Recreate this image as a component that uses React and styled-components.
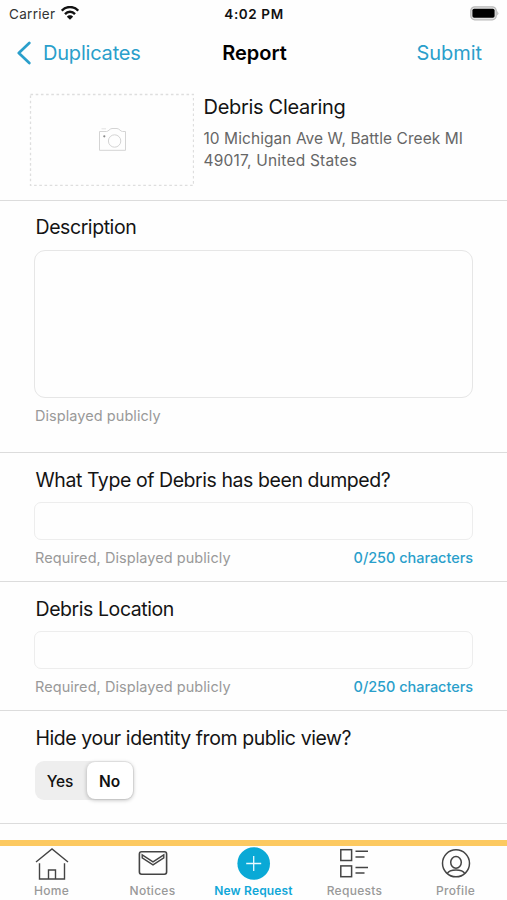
import React, { useState } from "react";
import styled, { createGlobalStyle } from "styled-components";

const BLUE = "#2a9fcb";

const GlobalStyle = createGlobalStyle`
  * {
    box-sizing: border-box;
  }
  body {
    margin: 0;
    background: #fff;
    font-family: Inter, "Liberation Sans", sans-serif;
    color: #141414;
  }
  button, input, textarea {
    font-family: inherit;
  }
`;

const Screen = styled.div`
  width: 507px;
  height: 900px;
  display: flex;
  flex-direction: column;
  overflow: hidden;
  background: #fefefe;
`;

const StatusBar = styled.div`
  height: 28px;
  padding: 0 8px 0 9px;
  display: grid;
  grid-template-columns: 1fr auto 1fr;
  align-items: center;
`;

const Carrier = styled.div`
  display: flex;
  align-items: center;
  gap: 6px;
  font-size: 13.5px;
  line-height: 28px;
  letter-spacing: 0.3px;
  color: #333;

  svg {
    position: relative;
    top: -1px;
  }
`;

const Clock = styled.div`
  font-size: 13.5px;
  font-weight: 600;
  line-height: 28px;
  letter-spacing: 0.6px;
  color: #111;
`;

const BatteryIcon = styled.svg`
  justify-self: end;
  display: block;
  margin-top: -2px;
`;

const NavBar = styled.div`
  height: 49px;
  padding: 0 25px 0 17px;
  display: grid;
  grid-template-columns: 200px 75px 190px;
  align-items: center;
`;

const NavButton = styled.button`
  display: flex;
  align-items: center;
  gap: 12px;
  padding: 0;
  border: none;
  background: none;
  color: ${BLUE};
  font-size: 20px;
  line-height: 24px;
  letter-spacing: ${(props) => props.$spacing};
  justify-self: ${(props) => props.$side};
`;

const NavTitle = styled.div`
  text-align: center;
  font-size: 20px;
  line-height: 24px;
  font-weight: 600;
  letter-spacing: 0;
  color: #000;
`;

const Summary = styled.div`
  height: 124px;
  padding: 16px 24px 0 29px;
  display: flex;
  gap: 9.5px;
  border-bottom: 1px solid #dcdcdc;
`;

const PhotoBox = styled.div`
  width: 165px;
  height: 93px;
  flex: none;
  display: flex;
  align-items: center;
  justify-content: center;
`;

const Title = styled.div`
  padding-top: 1px;
  font-size: 20px;
  line-height: 26px;
  letter-spacing: -0.3px;
`;

const Address = styled.div`
  margin-top: 8px;
  font-size: 15.5px;
  line-height: 22px;
  letter-spacing: ${(props) => props.$spacing};
  color: #666;
  white-space: nowrap;

  & + & {
    margin-top: 0;
  }
`;

const Section = styled.section`
  height: ${(props) => props.$height};
  padding: 13px 34px 0 35px;
  border-bottom: 1px solid #dcdcdc;
`;

const Label = styled.label`
  display: block;
  height: 26px;
  padding-left: 0.5px;
  font-size: 19.5px;
  line-height: ${(props) => props.$line || "28px"};
  letter-spacing: -0.43px;
  white-space: nowrap;
`;

const TextArea = styled.textarea`
  display: block;
  width: 439px;
  height: 148px;
  margin: 10px 0 0 -1px;
  border: 1px solid #e6e6e6;
  border-radius: 11px;
  background: #fefefe;
  resize: none;
  outline: none;
`;

const Input = styled.input`
  display: block;
  width: 439px;
  height: 38px;
  margin: 10px 0 0 -1px;
  border: 1px solid #ededed;
  border-radius: 7px;
  background: #fefefe;
  outline: none;
`;

const Hints = styled.div`
  margin-top: 8px;
  display: flex;
  justify-content: space-between;
  font-size: 14.5px;
  line-height: 20px;
  letter-spacing: 0.06px;
  color: #999;
`;

const Counter = styled.span`
  color: ${BLUE};
  font-weight: 500;
  letter-spacing: -0.04px;
`;

const Segmented = styled.div`
  display: flex;
  width: 99px;
  height: 39px;
  margin-top: 11px;
  padding: 1px;
  border-radius: 9px;
  background: #eee;
`;

const Segment = styled.button`
  width: ${(props) => (props.$active ? "46px" : "51px")};
  padding: ${(props) => (props.$active ? "2px 1px 0 0" : "2px 3px 0 0")};
  border: none;
  border-radius: 8px;
  font-size: 15.5px;
  letter-spacing: -0.2px;
  color: #111;
  font-weight: ${(props) => (props.$active ? 600 : 500)};
  background: ${(props) => (props.$active ? "#fff" : "transparent")};
  box-shadow: ${(props) =>
    props.$active ? "0 1px 4px rgba(0, 0, 0, 0.28)" : "none"};
`;

const TabBar = styled.nav`
  height: 60px;
  margin-top: auto;
  padding: 0 1px;
  border-top: 6px solid #fcc961;
  display: grid;
  grid-template-columns: repeat(5, 101px);
`;

const Tab = styled.div`
  display: flex;
  flex-direction: column;
  align-items: center;
  font-size: 12px;
  line-height: 16px;
  letter-spacing: ${(props) => props.$spacing};
  font-weight: ${(props) => (props.$active ? 600 : 500)};
  color: ${(props) => (props.$active ? "#10a7d8" : "#999")};
  white-space: nowrap;

  svg {
    display: block;
    flex: none;
    margin-bottom: 3px;
  }
`;

function WifiIcon() {
  return (
    <svg width="18" height="14" viewBox="0 0 18 14" fill="none" stroke="#111" strokeWidth="2.4">
      <path d="M0.8 4.7 C5.2 -0.2 12.8 -0.2 17.2 4.7" />
      <path d="M4 8.1 C6.8 5 11.2 5 14 8.1" />
      <path d="M9 13.8 L5.9 10.7 C7.5 8.9 10.5 8.9 12.1 10.7 Z" fill="#111" stroke="none" />
    </svg>
  );
}

function Battery() {
  return (
    <BatteryIcon width="29" height="15" viewBox="0 0 29 15">
      <rect x="0.8" y="0.8" width="25.4" height="13" rx="4" fill="#e4e4e4" stroke="#b9b9b9" strokeWidth="1.3" />
      <rect x="2.4" y="2.8" width="22.2" height="9" rx="1.8" fill="#000" />
      <path d="M27.3 5 Q29.4 7.3 27.3 9.6 Z" fill="#b0b0b0" />
    </BatteryIcon>
  );
}

function PhotoPlaceholder() {
  return (
    <svg width="165" height="93" viewBox="0 0 165 93" fill="none" stroke="#d4d4d4">
      <rect x="1.5" y="1.5" width="163" height="91" strokeDasharray="2.6 2.6" stroke="#dedede" strokeWidth="1.3" />
      <path d="M70.5 38.5 H77.5 C79.5 38.5 80.5 35.7 83 35.5 H88 C90.5 35.7 91.5 38.5 93.5 38.5 H96.5 V57.3 H70.5 Z" />
      <circle cx="85.6" cy="48" r="6.2" />
      <path d="M72.5 35.8 H77" stroke="#e2e2e2" />
      <circle cx="75.3" cy="43.3" r="1.1" fill="#888" stroke="none" />
    </svg>
  );
}

function HomeIcon() {
  return (
    <svg width="36" height="34" viewBox="0 0 36 34" fill="none" stroke="#444" strokeWidth="1.4">
      <path d="M2 16 L18 3 L34 16 M5.5 17.3 V33 H30.5 V17.3 M14.5 33 V24 H21.5 V33" />
    </svg>
  );
}

function MailIcon() {
  return (
    <svg width="36" height="34" viewBox="0 0 36 34" fill="none" stroke="#444" strokeWidth="1.6">
      <rect x="4.4" y="5.8" width="27.2" height="22.4" rx="2.2" />
      <path d="M7.2 8.9 L18 15.8 L28.8 8.9 V11.8 L18 18.8 L7.2 11.8 Z" strokeWidth="1.4" />
    </svg>
  );
}

function PlusIcon() {
  return (
    <svg width="36" height="34" viewBox="0 0 36 34" fill="none">
      <circle cx="17.7" cy="17.5" r="16.3" fill="#0aa9d6" />
      <path d="M10.2 17.5 H25.2 M17.7 10 V25" stroke="#e8faff" strokeWidth="1.3" />
    </svg>
  );
}

function ListIcon() {
  return (
    <svg width="36" height="34" viewBox="0 0 36 34" fill="none" stroke="#444" strokeWidth="1.5">
      <rect x="3.8" y="3.7" width="10.8" height="10.8" />
      <rect x="3.8" y="19.9" width="10.8" height="10.8" />
      <path d="M18.5 5.3 H31 M18.5 10.9 H27.5 M18.5 21.4 H31 M18.5 27 H27.5" />
    </svg>
  );
}

function ProfileIcon() {
  return (
    <svg width="36" height="34" viewBox="0 0 36 34" fill="none" stroke="#444" strokeWidth="1.5">
      <circle cx="18" cy="17.3" r="13.5" />
      <ellipse cx="18" cy="16.3" rx="5.3" ry="5.9" />
      <path d="M9.4 27.4 C11.5 22.9 24.5 22.9 26.6 27.4" />
    </svg>
  );
}

const TABS = [
  { name: "Home", icon: <HomeIcon />, spacing: "0.3px" },
  { name: "Notices", icon: <MailIcon />, spacing: "0.3px" },
  { name: "New Request", icon: <PlusIcon />, spacing: "0.17px", active: true },
  { name: "Requests", icon: <ListIcon />, spacing: "0.3px" },
  { name: "Profile", icon: <ProfileIcon />, spacing: "0.3px" },
];

function Question({ label }) {
  const [value, setValue] = useState("");

  return (
    <Section $height="129px">
      <Label>{label}</Label>
      <Input value={value} maxLength={250} onChange={(e) => setValue(e.target.value)} />
      <Hints>
        <span>Required, Displayed publicly</span>
        <Counter>{value.length}/250 characters</Counter>
      </Hints>
    </Section>
  );
}

export default function App() {
  const [hidden, setHidden] = useState(false);

  return (
    <>
      <GlobalStyle />
      <Screen>
        <StatusBar>
          <Carrier>
            <span>Carrier</span>
            <WifiIcon />
          </Carrier>
          <Clock>4:02 PM</Clock>
          <Battery />
        </StatusBar>
        <NavBar>
          <NavButton $side="start" $spacing="-0.2px">
            <svg width="14" height="24" viewBox="0 0 14 24" fill="none" stroke={BLUE} strokeWidth="2.7" strokeLinecap="round" strokeLinejoin="round">
              <path d="M12.3 2 L1.8 12 L12.3 22" />
            </svg>
            <span>Duplicates</span>
          </NavButton>
          <NavTitle>Report</NavTitle>
          <NavButton $side="end" $spacing="-0.05px">Submit</NavButton>
        </NavBar>
        <Summary>
          <PhotoBox>
            <PhotoPlaceholder />
          </PhotoBox>
          <div>
            <Title>Debris Clearing</Title>
            <Address $spacing="0.06px">10 Michigan Ave W, Battle Creek MI</Address>
            <Address $spacing="0.2px">49017, United States</Address>
          </div>
        </Summary>
        <Section $height="252px">
          <Label $line="27px">Description</Label>
          <TextArea />
          <Hints>Displayed publicly</Hints>
        </Section>
        <Question label="What Type of Debris has been dumped?" />
        <Question label="Debris Location" />
        <Section $height="113px">
          <Label>Hide your identity from public view?</Label>
          <Segmented>
            <Segment $active={hidden} onClick={() => setHidden(true)}>Yes</Segment>
            <Segment $active={!hidden} onClick={() => setHidden(false)}>No</Segment>
          </Segmented>
        </Section>
        <TabBar>
          {TABS.map((tab) => (
            <Tab key={tab.name} $active={tab.active} $spacing={tab.spacing}>
              {tab.icon}
              {tab.name}
            </Tab>
          ))}
        </TabBar>
      </Screen>
    </>
  );
}
